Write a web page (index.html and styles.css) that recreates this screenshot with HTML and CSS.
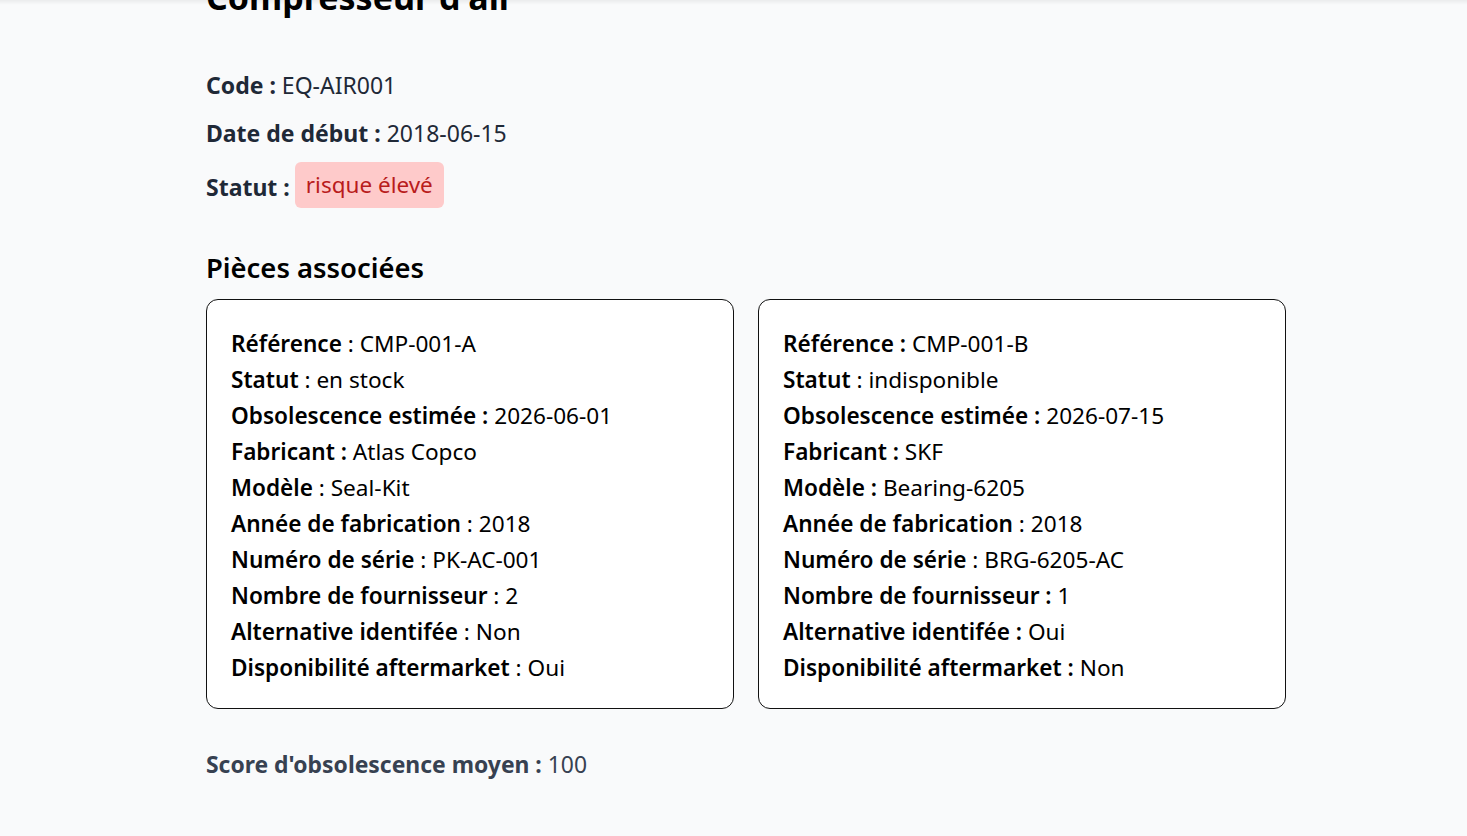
FILE: index.html
```html
<!DOCTYPE html>
<html lang="fr">
<head>
<meta charset="utf-8">
<title>Compresseur d'air</title>
<link rel="stylesheet" href="styles.css">
</head>
<body>
<div class="shade"></div>
<main class="page">
  <h1 class="title">Compresseur d'air</h1>
  <section class="info">
    <p class="info-line"><strong>Code :</strong> EQ-AIR001</p>
    <p class="info-line"><strong>Date de début :</strong> 2018-06-15</p>
    <p class="info-line status-line"><strong class="status-label">Statut :</strong> <span class="badge">risque élevé</span></p>
  </section>
  <h2 class="section-title">Pièces associées</h2>
  <div class="cards">
    <div class="card">
      <p><b>Référence</b> : CMP-001-A</p>
      <p><b>Statut</b> : en stock</p>
      <p><b>Obsolescence estimée :</b> 2026-06-01</p>
      <p><b>Fabricant :</b> Atlas Copco</p>
      <p><b>Modèle</b> : Seal-Kit</p>
      <p><b>Année de fabrication</b> : 2018</p>
      <p><b>Numéro de série</b> : PK-AC-001</p>
      <p><b>Nombre de fournisseur</b> : 2</p>
      <p><b>Alternative identifée</b> : Non</p>
      <p><b>Disponibilité aftermarket</b> : Oui</p>
    </div>
    <div class="card">
      <p><b>Référence :</b> CMP-001-B</p>
      <p><b>Statut</b> : indisponible</p>
      <p><b>Obsolescence estimée :</b> 2026-07-15</p>
      <p><b>Fabricant :</b> SKF</p>
      <p><b>Modèle :</b> Bearing-6205</p>
      <p><b>Année de fabrication</b> : 2018</p>
      <p><b>Numéro de série</b> : BRG-6205-AC</p>
      <p><b>Nombre de fournisseur :</b> 1</p>
      <p><b>Alternative identifée :</b> Oui</p>
      <p><b>Disponibilité aftermarket :</b> Non</p>
    </div>
  </div>
  <p class="score"><strong>Score d'obsolescence moyen :</strong> 100</p>
</main>
</body>
</html>
```

FILE: styles.css
```css
html, body {
  margin: 0;
  padding: 0;
  background: #f9fafb;
}
body {
  font-family: "Noto Sans", "Open Sans", sans-serif;
  color: #1f2937;
  overflow: hidden;
  height: 836px;
  position: relative;
}
.shade {
  position: absolute;
  top: 0;
  left: 0;
  right: 0;
  height: 5px;
  z-index: 1;
  background: linear-gradient(rgba(0,0,0,0.06), rgba(0,0,0,0));
}
.page {
  width: 1080px;
  margin-left: 206px;
  margin-top: -27px;
}
.title {
  font-size: 34px;
  line-height: 48px;
  font-weight: 700;
  color: #000;
  margin: 0 0 48px;
}
.info-line {
  font-size: 23px;
  line-height: 32px;
  margin: 0 0 16px;
}
.info-line strong {
  font-weight: 700;
}
.status-line {
  display: flex;
  align-items: center;
  gap: 5px;
  margin-top: -3px;
}
.status-label {
  padding-top: 4px;
}
.badge {
  display: inline-block;
  background: #fecaca;
  color: #b91c1c;
  border-radius: 6px;
  padding: 7px 11px;
  line-height: 32px;
  font-size: 22.5px;
}
.section-title {
  font-size: 27.4px;
  font-weight: 600;
  line-height: 36px;
  color: #000;
  margin: 42px 0 13px;
}
.cards {
  display: grid;
  grid-template-columns: 1fr 1fr;
  gap: 24px;
}
.card {
  background: #fff;
  border: 1px solid #111;
  border-radius: 12px;
  padding: 26px 24px 22px;
  color: #000;
}
.card p {
  margin: 0;
  font-size: 22.6px;
  line-height: 36px;
}
.card b {
  font-weight: 600;
}
.score {
  font-size: 22.9px;
  line-height: 32px;
  color: #374151;
  margin: 40px 0 0;
}
.score strong {
  font-weight: 700;
}
```
